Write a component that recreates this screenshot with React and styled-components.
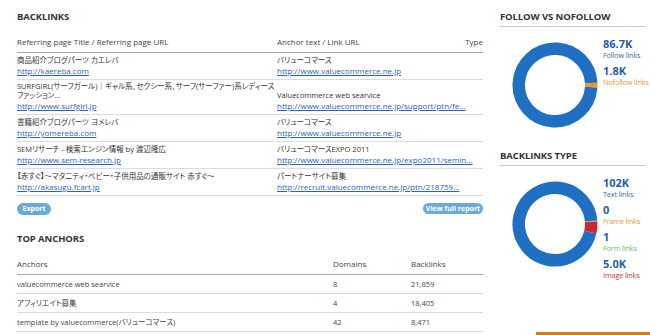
import React from "react";
import styled, { createGlobalStyle } from "styled-components";

const Global = createGlobalStyle`
  html, body { margin: 0; padding: 0; background: #fff; }
  body { font-family: "Open Sans", "Noto Sans CJK JP", sans-serif; color: #333; }
  * { box-sizing: border-box; }
`;

const Page = styled.div`
  display: flex;
  gap: 17px;
  padding: 11px 0 0 17px;
  width: 650px;
  height: 335px;
  overflow: hidden;
  position: relative;
`;

const Main = styled.div`
  width: 466px;
  min-width: 0;
  display: flex;
  flex-direction: column;
`;

const Side = styled.div`
  width: 145px;
  display: flex;
  flex-direction: column;
`;

const Title = styled.h2`
  margin: ${(p) => p.$mt || 0}px 0 0;
  font-size: 9.5px;
  font-weight: 700;
  color: #333;
  line-height: 12px;
  letter-spacing: -0.1px;
  padding-bottom: ${(p) => p.$pb || 0}px;
  border-bottom: ${(p) => (p.$rule ? "1.5px solid #c9c9c9" : "none")};
`;

const Grid = styled.div`
  display: grid;
  grid-template-columns: ${(p) => p.$cols};
  margin-top: ${(p) => p.$mt || 0}px;
`;

const HeadCell = styled.div`
  font-size: 8px;
  line-height: 10px;
  color: #444;
  padding: 8px 0 5px;
  border-bottom: 1px solid #a8a8a8;
  text-align: ${(p) => p.$align || "left"};
  white-space: nowrap;
`;

const Cell = styled.div`
  display: flex;
  flex-direction: column;
  justify-content: flex-end;
  padding: 2px 0 3px;
  border-bottom: 1px solid #dcdcdc;
  min-height: 27px;
  min-width: 0;
  overflow: visible;
  white-space: nowrap;
`;

const Txt = styled.span`
  font-size: 7.5px;
  line-height: 9px;
  color: #333;
  font-feature-settings: "palt";
`;

const Link = styled.a`
  font-size: 8px;
  line-height: 11px;
  color: #2a64b4;
  text-decoration: underline;
`;

const SimpleCell = styled.div`
  font-size: 7.5px;
  line-height: 18px;
  color: #444;
  border-bottom: 1px solid #dcdcdc;
  white-space: nowrap;
  font-feature-settings: "palt";
`;

const ButtonBar = styled.div`
  display: flex;
  justify-content: space-between;
  margin-top: 7px;
`;

const Pill = styled.button`
  border: none;
  background: #6baad8;
  color: #fff;
  font-family: inherit;
  font-weight: 700;
  font-size: 7px;
  height: ${(p) => p.$h}px;
  width: ${(p) => p.$w}px;
  border-radius: 8px;
  padding: 0;
  line-height: ${(p) => p.$h}px;
`;

const Chart = styled.div`
  display: flex;
  gap: 5px;
  margin-top: ${(p) => p.$mt}px;
  padding-left: 12px;
`;

const Legend = styled.div`
  display: flex;
  flex-direction: column;
  margin-top: -4px;
  white-space: nowrap;
`;

const Num = styled.div`
  font-size: 11px;
  font-weight: 700;
  color: #1f5ea8;
  line-height: 12px;
`;

const Lbl = styled.div`
  font-size: 7.3px;
  letter-spacing: -0.15px;
  line-height: 10px;
  color: ${(p) => p.$c};
  margin-bottom: 5px;
`;

const OrangeBar = styled.div`
  position: absolute;
  left: 536px;
  bottom: 0;
  width: 114px;
  height: 3px;
  background: #cc7a27;
`;

function Donut({ segments }) {
  const r = 36.25;
  const c = 2 * Math.PI * r;
  return (
    <svg width="86" height="86" viewBox="0 0 86 86" style={{ flex: "none" }}>
      {segments.map((s, i) => (
        <circle
          key={i}
          cx="43"
          cy="43"
          r={r}
          fill="none"
          stroke={s.color}
          strokeWidth="12.5"
          strokeDasharray={`${((s.to - s.from) / 360) * c} ${c}`}
          transform={`rotate(${s.from} 43 43)`}
        />
      ))}
    </svg>
  );
}

const backlinks = [
  { t: ["商品紹介ブログパーツ カエレバ"], u: "http://kaereba.com", a: "バリューコマース", au: "http://www.valuecommerce.ne.jp" },
  { t: ["SURFGIRL(サーフガール)｜ギャル系、セクシー系、サーフ(サーファー)系レディース", "ファッション..."], u: "http://www.surfgirl.jp", a: "Valuecommerce web searvice", au: "http://www.valuecommerce.ne.jp/support/ptn/fe..." },
  { t: ["書籍紹介ブログパーツ ヨメレバ"], u: "http://yomereba.com", a: "バリューコマース", au: "http://www.valuecommerce.ne.jp" },
  { t: ["SEMリサーチ - 検索エンジン情報 by 渡辺隆広"], u: "http://www.sem-research.jp", a: "バリューコマースEXPO 2011", au: "http://www.valuecommerce.ne.jp/expo2011/semin..." },
  { t: ["【赤すぐ】～マタニティ・ベビー・子供用品の通販サイト 赤すぐ～"], u: "http://akasugu.fcart.jp", a: "パートナーサイト募集", au: "http://recruit.valuecommerce.ne.jp/ptn/218759..." },
];

const anchors = [
  ["valuecommerce web searvice", "8", "21,859"],
  ["アフィリエイト募集", "4", "18,405"],
  ["template by valuecommerce(バリューコマース)", "42", "8,471"],
];

export default function App() {
  return (
    <>
      <Global />
      <Page>
        <Main>
          <Title>BACKLINKS</Title>
          <Grid $cols="260px minmax(0, 1fr) 30px" $mt={6}>
            <HeadCell>Referring page Title / Referring page URL</HeadCell>
            <HeadCell>Anchor text / Link URL</HeadCell>
            <HeadCell $align="right">Type</HeadCell>
            {backlinks.map((b, i) => (
              <React.Fragment key={i}>
                <Cell>
                  {b.t.map((l, j) => (
                    <Txt key={j}>{l}</Txt>
                  ))}
                  <Link href="#">{b.u}</Link>
                </Cell>
                <Cell>
                  <Txt>{b.a}</Txt>
                  <Link href="#">{b.au}</Link>
                </Cell>
                <Cell />
              </React.Fragment>
            ))}
          </Grid>
          <ButtonBar>
            <Pill $w={34} $h={12}>Export</Pill>
            <Pill $w={60} $h={11}>View full report</Pill>
          </ButtonBar>
          <Title $mt={18}>TOP ANCHORS</Title>
          <Grid $cols="316px 78px minmax(0, 1fr)" $mt={6}>
            <HeadCell>Anchors</HeadCell>
            <HeadCell>Domains</HeadCell>
            <HeadCell>Backlinks</HeadCell>
            {anchors.map((r, i) => (
              <React.Fragment key={i}>
                <SimpleCell>{r[0]}</SimpleCell>
                <SimpleCell>{r[1]}</SimpleCell>
                <SimpleCell>{r[2]}</SimpleCell>
              </React.Fragment>
            ))}
          </Grid>
        </Main>
        <Side>
          <Title $rule $pb={3}>FOLLOW VS NOFOLLOW</Title>
          <Chart $mt={15}>
            <Donut
              segments={[
                { from: 3.5, to: 356.5, color: "#1f70c3" },
                { from: -3.5, to: 3.5, color: "#f0952e" },
              ]}
            />
            <Legend>
              <Num>86.7K</Num>
              <Lbl $c="#3a6eaa">Follow links</Lbl>
              <Num>1.8K</Num>
              <Lbl $c="#ef9537">Nofollow links</Lbl>
            </Legend>
          </Chart>
          <Title $rule $pb={3} $mt={22}>BACKLINKS TYPE</Title>
          <Chart $mt={15}>
            <Donut
              segments={[
                { from: 13, to: 355, color: "#1f70c3" },
                { from: -5, to: -3.5, color: "#8cc063" },
                { from: -3.5, to: 13, color: "#c8282e" },
              ]}
            />
            <Legend>
              <Num>102K</Num>
              <Lbl $c="#3a6eaa">Text links</Lbl>
              <Num>0</Num>
              <Lbl $c="#ef9537">Frame links</Lbl>
              <Num>1</Num>
              <Lbl $c="#7cb552">Form links</Lbl>
              <Num>5.0K</Num>
              <Lbl $c="#c03a3e">Image links</Lbl>
            </Legend>
          </Chart>
        </Side>
        <OrangeBar />
      </Page>
    </>
  );
}
